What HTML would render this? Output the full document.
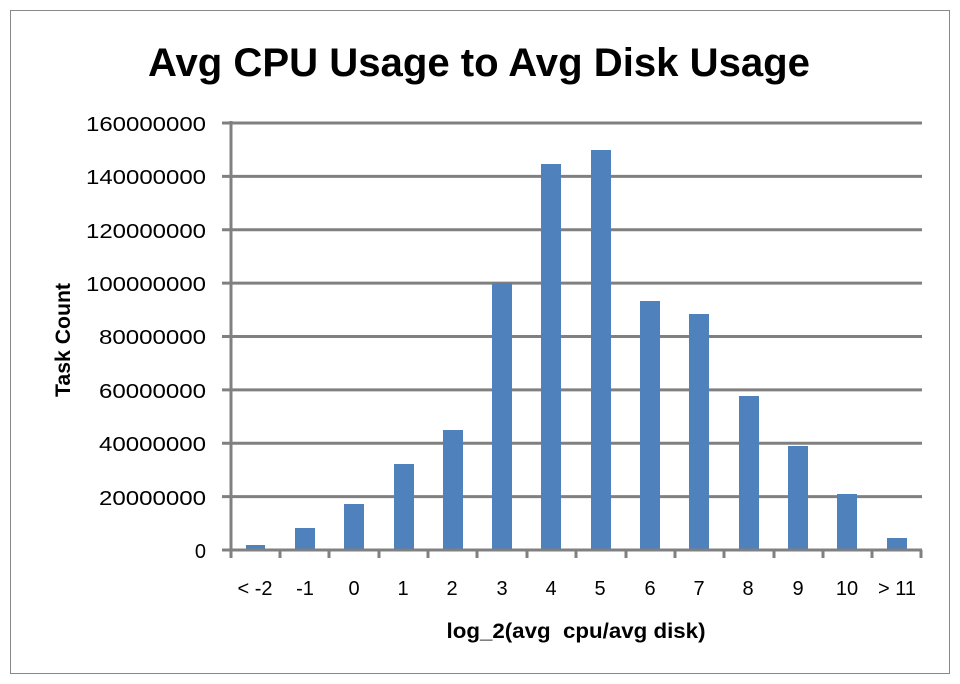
<!DOCTYPE html>
<html><head><style>
body{margin:0;background:#fff;}
svg{display:block;font-family:"Liberation Sans",Calibri,sans-serif;}
</style></head><body>
<svg width="960" height="684" viewBox="0 0 960 684" xmlns="http://www.w3.org/2000/svg">
<rect x="0" y="0" width="960" height="684" fill="#fff"/>
<rect x="10.5" y="10.5" width="939" height="663" fill="none" stroke="#888" stroke-width="1"/>
<text x="479" y="76" text-anchor="middle" font-size="40" font-weight="bold" fill="#000" textLength="662" lengthAdjust="spacingAndGlyphs">Avg CPU Usage to Avg Disk Usage</text>
<g stroke="#808080" stroke-width="3">
<line x1="222" y1="123" x2="922" y2="123"/>
<line x1="222" y1="176.4" x2="922" y2="176.4"/>
<line x1="222" y1="229.8" x2="922" y2="229.8"/>
<line x1="222" y1="283.1" x2="922" y2="283.1"/>
<line x1="222" y1="336.5" x2="922" y2="336.5"/>
<line x1="222" y1="389.9" x2="922" y2="389.9"/>
<line x1="222" y1="443.2" x2="922" y2="443.2"/>
<line x1="222" y1="496.6" x2="922" y2="496.6"/>
</g>
<g fill="#4f81bd">
<rect x="246" y="545" width="19" height="5"/>
<rect x="295" y="528" width="20" height="22"/>
<rect x="344" y="504" width="20" height="46"/>
<rect x="394" y="464" width="20" height="86"/>
<rect x="443" y="430" width="20" height="120"/>
<rect x="492" y="283" width="20" height="267"/>
<rect x="541" y="164" width="20" height="386"/>
<rect x="591" y="150" width="20" height="400"/>
<rect x="640" y="301" width="20" height="249"/>
<rect x="689" y="314" width="20" height="236"/>
<rect x="739" y="396" width="20" height="154"/>
<rect x="788" y="446" width="20" height="104"/>
<rect x="837" y="494" width="20" height="56"/>
<rect x="887" y="538" width="20" height="12"/>
</g>
<g stroke="#808080" stroke-width="3">
<line x1="231" y1="121" x2="231" y2="558"/>
<line x1="222" y1="550" x2="922" y2="550"/>
<line x1="280" y1="550" x2="280" y2="558"/>
<line x1="329" y1="550" x2="329" y2="558"/>
<line x1="379" y1="550" x2="379" y2="558"/>
<line x1="428" y1="550" x2="428" y2="558"/>
<line x1="477" y1="550" x2="477" y2="558"/>
<line x1="527" y1="550" x2="527" y2="558"/>
<line x1="576" y1="550" x2="576" y2="558"/>
<line x1="626" y1="550" x2="626" y2="558"/>
<line x1="675" y1="550" x2="675" y2="558"/>
<line x1="724" y1="550" x2="724" y2="558"/>
<line x1="774" y1="550" x2="774" y2="558"/>
<line x1="823" y1="550" x2="823" y2="558"/>
<line x1="872" y1="550" x2="872" y2="558"/>
<line x1="921" y1="550" x2="921" y2="558"/>
</g>
<g font-size="20" text-anchor="end" fill="#000">
<text x="206" y="131" textLength="120" lengthAdjust="spacingAndGlyphs">160000000</text>
<text x="206" y="184" textLength="120" lengthAdjust="spacingAndGlyphs">140000000</text>
<text x="206" y="238" textLength="120" lengthAdjust="spacingAndGlyphs">120000000</text>
<text x="206" y="291" textLength="120" lengthAdjust="spacingAndGlyphs">100000000</text>
<text x="206" y="344" textLength="107" lengthAdjust="spacingAndGlyphs">80000000</text>
<text x="206" y="398" textLength="107" lengthAdjust="spacingAndGlyphs">60000000</text>
<text x="206" y="451" textLength="107" lengthAdjust="spacingAndGlyphs">40000000</text>
<text x="206" y="505" textLength="107" lengthAdjust="spacingAndGlyphs">20000000</text>
<text x="206" y="558">0</text>
</g>
<g font-size="20" text-anchor="middle" fill="#000">
<text x="255" y="595">&lt; -2</text>
<text x="305" y="595">-1</text>
<text x="354" y="595">0</text>
<text x="403" y="595">1</text>
<text x="452" y="595">2</text>
<text x="502" y="595">3</text>
<text x="551" y="595">4</text>
<text x="600" y="595">5</text>
<text x="650" y="595">6</text>
<text x="699" y="595">7</text>
<text x="748" y="595">8</text>
<text x="798" y="595">9</text>
<text x="847" y="595">10</text>
<text x="897" y="595">&gt; 11</text>
</g>
<text x="576" y="638" text-anchor="middle" font-size="21" font-weight="bold" textLength="259" lengthAdjust="spacingAndGlyphs">log_2(avg&#160; cpu/avg disk)</text>
<text transform="translate(70,340) rotate(-90)" text-anchor="middle" font-size="21" font-weight="bold" textLength="114" lengthAdjust="spacingAndGlyphs">Task Count</text>
</svg>
</body></html>
